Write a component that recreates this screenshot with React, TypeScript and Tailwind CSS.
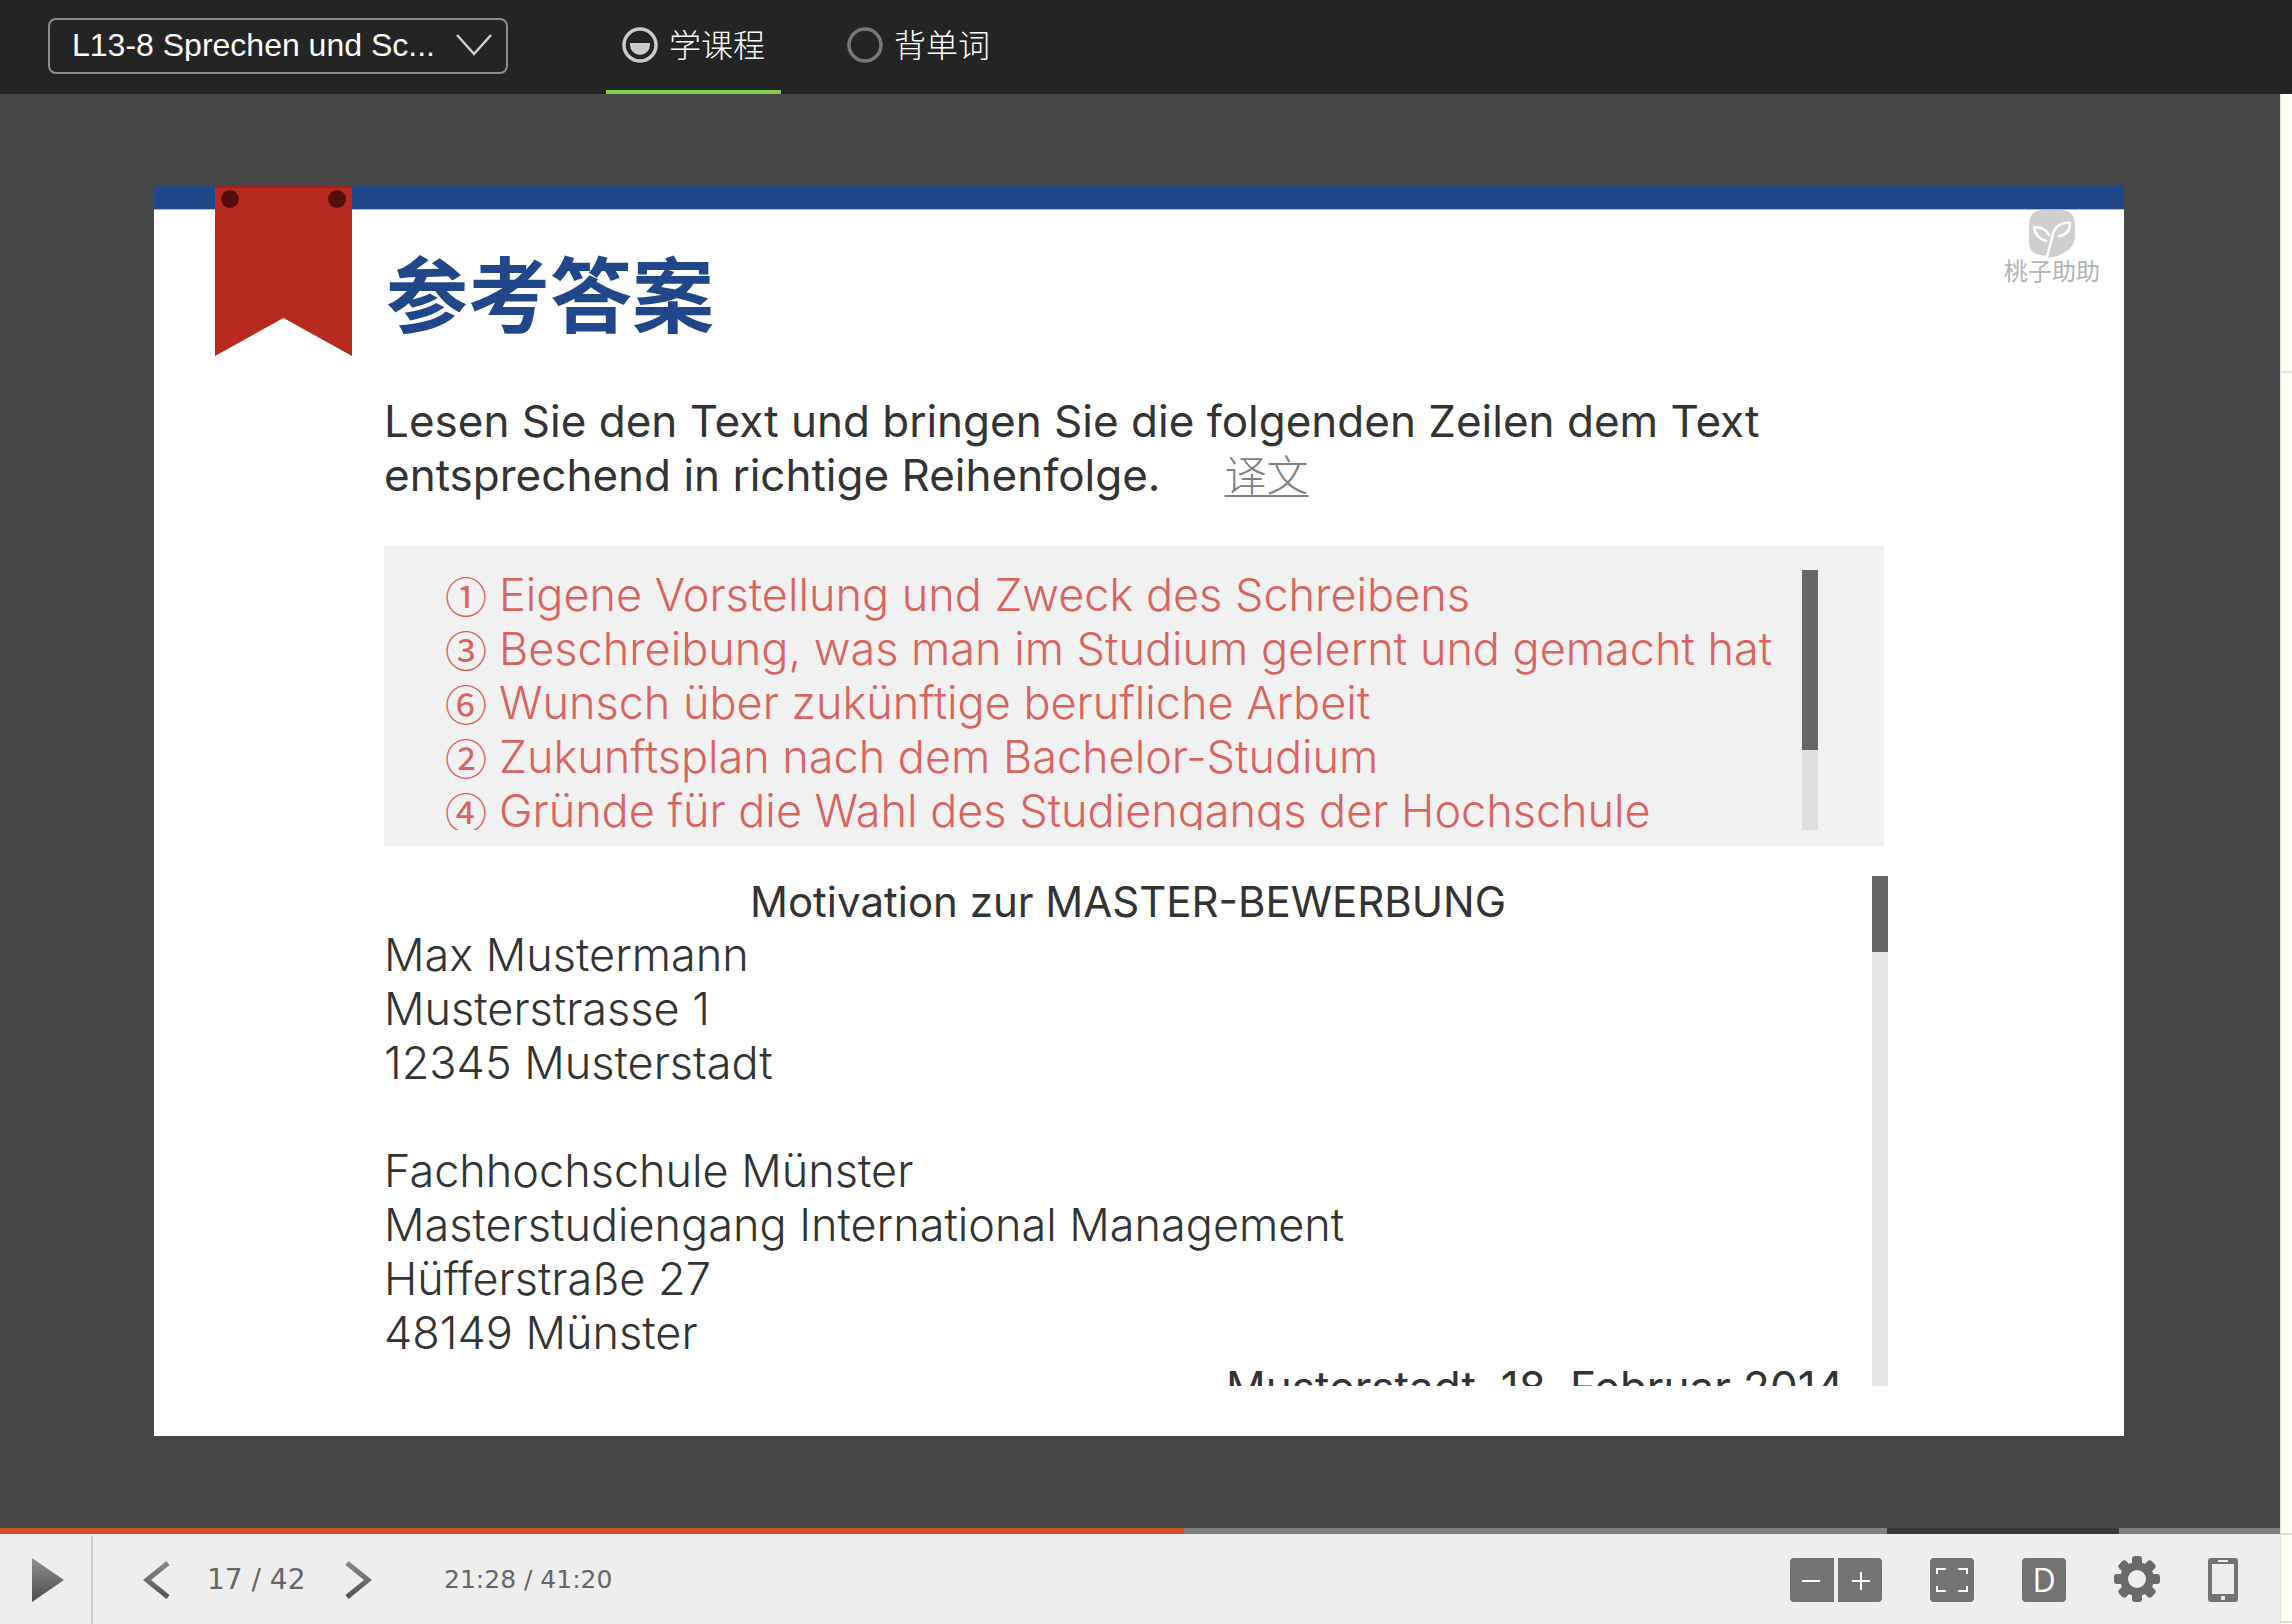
import { useState } from "react";

const answers = [
  ["①", "Eigene Vorstellung und Zweck des Schreibens"],
  ["③", "Beschreibung, was man im Studium gelernt und gemacht hat"],
  ["⑥", "Wunsch über zukünftige berufliche Arbeit"],
  ["②", "Zukunftsplan nach dem Bachelor-Studium"],
  ["④", "Gründe für die Wahl des Studiengangs der Hochschule"],
];

function CourseIcon() {
  return (
    <svg className="size-9" viewBox="0 0 36 36" fill="none" aria-hidden="true">
      <circle cx="18" cy="18" r="16" stroke="#cbcbcb" strokeWidth="3.5" />
      <path d="M8 16h20v2a10 10 0 0 1-20 0z" fill="#cbcbcb" />
    </svg>
  );
}

function WordsIcon() {
  return (
    <svg className="size-9" viewBox="0 0 36 36" fill="none" aria-hidden="true">
      <circle cx="18" cy="18" r="16" stroke="#777" strokeWidth="3.5" />
    </svg>
  );
}

function Header() {
  const [tab, setTab] = useState("course");
  const tabs = [
    { id: "course", label: "学课程", icon: <CourseIcon /> },
    { id: "words", label: "背单词", icon: <WordsIcon /> },
  ];
  return (
    <header className="flex h-[94px] shrink-0 items-stretch bg-[#242424] pl-12 text-white">
      <div className="relative mt-[18px] h-14 w-[460px]">
        <select
          aria-label="Lektion"
          className="h-full w-full appearance-none rounded-lg border-2 border-[#8c8c8c] bg-transparent pr-16 pb-0.5 pl-[22px] font-['Liberation_Sans',sans-serif] text-[32px] leading-none"
        >
          <option>L13-8 Sprechen und Sc...</option>
        </select>
        <svg
          className="pointer-events-none absolute top-4 right-4 h-[22px] w-9"
          viewBox="0 0 36 22"
          fill="none"
          stroke="#cfcfcf"
          strokeWidth="2.5"
          aria-hidden="true"
        >
          <path d="M1 1 18 20 35 1" />
        </svg>
      </div>
      <nav className="ml-[98px] flex gap-[50px]">
        {tabs.map((t) => (
          <button
            key={t.id}
            type="button"
            onClick={() => setTab(t.id)}
            className={`flex items-center gap-[11px] border-b-4 px-4 font-['Noto_Sans_CJK_SC',sans-serif] text-[32px] leading-none font-light ${
              tab === t.id ? "border-[#7fcf4c]" : "border-transparent"
            }`}
          >
            {t.icon}
            <span className="pb-1">{t.label}</span>
          </button>
        ))}
      </nav>
    </header>
  );
}

function Ribbon() {
  return (
    <svg className="absolute top-0 left-[61px] h-[170px] w-[137px]" viewBox="0 0 137 170" aria-hidden="true">
      <path d="M0 0H137V170L68.500 132 0 170z" fill="#b92a1e" />
      <path d="M0 0H137V2H0z" fill="#9c2426" />
      <circle cx="15" cy="13" r="9" fill="#550d0b" />
      <circle cx="122" cy="13" r="9" fill="#550d0b" />
    </svg>
  );
}

function Logo() {
  return (
    <div className="flex flex-col items-center text-[#b3b3b3]">
      <svg className="h-12 w-[46px]" viewBox="0 0 46 48" aria-hidden="true">
        <path
          d="M14 0H32C41 0 46 5 46 14V27C45 38 35 46 19 48L18 44C17 46 15 46 12 45C4 44 0 40 0 32V14C0 5 5 0 14 0z"
          fill="#cfcfcf"
        />
        <g fill="none" stroke="#fff" strokeWidth="2.5" strokeLinecap="round" strokeLinejoin="round">
          <path d="M18 47 24 24C26 16 33 12 41 13C41 21 37 25 30 26" />
          <path d="M20 25C17 19 12 17 5 17C6 24 10 29 17 31" />
        </g>
      </svg>
      <span className="font-['Noto_Sans_CJK_SC',sans-serif] text-2xl leading-6">桃子助助</span>
    </div>
  );
}

function AnswerPanel() {
  return (
    <div className="mt-[43px] flex h-[300px] items-start bg-[#f1f1f1] pt-[22px] pr-[66px] pl-[61px]">
      <ul className="h-[262px] min-w-0 flex-1 overflow-x-visible overflow-y-clip text-[#d9645f]">
        {answers.map(([mark, text]) => (
          <li key={mark} className="flex text-[45px] leading-[54px] font-light whitespace-nowrap">
            <span className="w-[54px] shrink-0 font-['Noto_Sans_CJK_SC',sans-serif] text-[42px] font-normal">{mark}</span>
            <span>{text}</span>
          </li>
        ))}
      </ul>
      <div className="mt-0.5 h-[260px] w-4 bg-[#dfdfdf]">
        <div className="h-[180px] bg-[#666]" />
      </div>
    </div>
  );
}

function Letter() {
  return (
    <div className="mt-[30px] -mr-1 mb-[50px] flex h-[510px]">
      <div className="h-full flex-1 overflow-hidden text-[45px] leading-[54px] font-light">
        <h2 className="text-center text-[42px] leading-[52px] font-normal">Motivation zur MASTER-BEWERBUNG</h2>
        <p>
          Max Mustermann
          <br />
          Musterstrasse 1
          <br />
          12345 Musterstadt
        </p>
        <p className="mt-[54px]">
          Fachhochschule Münster
          <br />
          Masterstudiengang International Management
          <br />
          Hüfferstraße 27
          <br />
          48149 Münster
        </p>
        <p className="pr-7 text-right text-[44px] font-normal">Musterstadt, 18. Februar 2014</p>
      </div>
      <div className="w-4 bg-[#e5e5e5]">
        <div className="h-[76px] bg-[#666]" />
      </div>
    </div>
  );
}

function Slide() {
  return (
    <article className="relative flex-1 bg-white text-[#333]">
      <div className="h-6 border-b border-[#a9bbd9] bg-[#1f478a]" />
      <Ribbon />
      <div className="flex h-[172px] justify-between pr-6 pl-[232px]">
        <h1 className="mt-10 font-['Noto_Sans_CJK_SC',sans-serif] text-[82px] leading-[82px] font-bold text-[#1f478a]">
          参考答案
        </h1>
        <Logo />
      </div>
      <div className="mr-60 ml-[230px] pt-3 font-['Inter','Noto_Sans_CJK_SC',sans-serif]">
        <p className="text-[44px] leading-[54px] font-normal">
          Lesen Sie den Text und bringen Sie die folgenden Zeilen dem Text
          <br />
          entsprechend in richtige Reihenfolge.
          <a
            href="#translation"
            className="ml-[64px] font-['Noto_Sans_CJK_SC',sans-serif] text-[42px] leading-none font-light text-[#808080] underline decoration-2 underline-offset-4"
          >
            译文
          </a>
        </p>
        <div className="pt-px">
          <AnswerPanel />
        </div>
        <Letter />
      </div>
    </article>
  );
}

function Progress() {
  return (
    <div className="flex h-1.5 shrink-0">
      <div className="grow-[1184] basis-0 bg-[#d15026]" />
      <div className="grow-[703] basis-0 bg-[#7f7f7f]" />
      <div className="grow-[232] basis-0 bg-[#3a3a3a]" />
      <div className="grow-[161] basis-0 bg-[#7f7f7f]" />
    </div>
  );
}

function Controls() {
  return (
    <footer className="flex h-[90px] shrink-0 items-center bg-[#eee] pt-0.5 pr-[42px] text-[#666]">
      <svg width="0" height="0" className="absolute" aria-hidden="true">
        <defs>
          <linearGradient id="shade" gradientUnits="userSpaceOnUse" x1="0" y1="0" x2="0" y2="44">
            <stop offset="0" stopColor="#909090" />
            <stop offset="1" stopColor="#4c4c4c" />
          </linearGradient>
        </defs>
      </svg>
      <button type="button" aria-label="Abspielen" className="flex h-full w-[93px] items-center border-r-2 border-[#ccc] pl-8">
        <svg className="h-11 w-8" viewBox="0 0 32 44" aria-hidden="true">
          <path d="M0 0 32 22 0 44z" fill="url(#shade)" />
        </svg>
      </button>
      <button type="button" aria-label="Zurück" className="ml-[50px]">
        <svg className="h-11 w-[27px]" viewBox="0 0 27 44" fill="none" stroke="url(#shade)" strokeWidth="5" aria-hidden="true">
          <path d="M25 5 4 22 25 39" />
        </svg>
      </button>
      <span className="ml-[37px] w-[102px] font-['DejaVu_Sans',sans-serif] text-[28px] whitespace-nowrap">17 / 42</span>
      <button type="button" aria-label="Weiter" className="ml-9">
        <svg className="h-11 w-[27px]" viewBox="0 0 27 44" fill="none" stroke="url(#shade)" strokeWidth="5" aria-hidden="true">
          <path d="M2 5 23 22 2 39" />
        </svg>
      </button>
      <span className="ml-[72px] font-['DejaVu_Sans',sans-serif] text-[25px] whitespace-nowrap">21:28 / 41:20</span>

      <div className="ml-auto flex items-center gap-12">
        <div className="flex gap-1">
          <button type="button" aria-label="Verkleinern" className="h-11 w-11 rounded-l bg-[#737373]">
            <svg className="size-11" viewBox="0 0 44 44" stroke="#fff" strokeWidth="2" aria-hidden="true">
              <path d="M12 23h18" />
            </svg>
          </button>
          <button type="button" aria-label="Vergrößern" className="h-11 w-11 rounded-r bg-[#737373]">
            <svg className="size-11" viewBox="0 0 44 44" stroke="#fff" strokeWidth="2" aria-hidden="true">
              <path d="M14 23h18M23 14v18" />
            </svg>
          </button>
        </div>
        <button type="button" aria-label="Vollbild" className="size-11 rounded bg-[#737373]">
          <svg className="size-11" viewBox="0 0 44 44" fill="none" stroke="#fff" strokeWidth="2" aria-hidden="true">
            <path d="M7 16V11H16M28 11H37V16M37 28V33H28M16 33H7V28" />
          </svg>
        </button>
        <button
          type="button"
          className="size-11 rounded bg-[#737373] font-['Open_Sans',sans-serif] text-[32px] leading-none text-white"
        >
          D
        </button>
        <button type="button" aria-label="Einstellungen" className="-mt-0.5">
          <svg className="size-[46px]" viewBox="0 0 46 46" fill="#6a6a6a" aria-hidden="true">
            <circle cx="23" cy="23" r="17" />
            {[0, 45, 90, 135].map((a) => (
              <rect key={a} x="18" y="0" width="10" height="46" rx="3" transform={`rotate(${a} 23 23)`} />
            ))}
            <circle cx="23" cy="23" r="9" fill="#eee" />
          </svg>
        </button>
        <button type="button" aria-label="Mobilgerät">
          <svg className="h-11 w-[30px]" viewBox="0 0 30 44" aria-hidden="true">
            <rect width="30" height="44" rx="3" fill="#737373" />
            <rect x="4" y="6" width="22" height="30" fill="#eee" />
            <rect x="10" y="2" width="10" height="2" fill="#eee" />
            <rect x="13" y="38" width="4" height="4" rx="1" fill="#eee" />
          </svg>
        </button>
      </div>
    </footer>
  );
}

export default function App() {
  return (
    <div className="flex min-h-screen flex-col overflow-hidden">
      <Header />
      <div className="flex flex-1">
        <main className="flex min-w-0 flex-1 flex-col">
          <section className="flex flex-1 bg-[#464646] pt-[92px] pr-[156px] pb-[92px] pl-[154px]">
            <Slide />
          </section>
          <Progress />
          <Controls />
        </main>
        <aside className="flex w-3 flex-col border-l border-[#e4e4e8] bg-[#fffef5]">
          <div className="h-[279px] border-b-2 border-[#e4e4e8]" />
          <div className="flex-1 border-b-2 border-[#dcdcdc]" />
          <div className="mb-px h-[88px] border-b-2 border-[#dcdcdc]" />
        </aside>
      </div>
    </div>
  );
}
